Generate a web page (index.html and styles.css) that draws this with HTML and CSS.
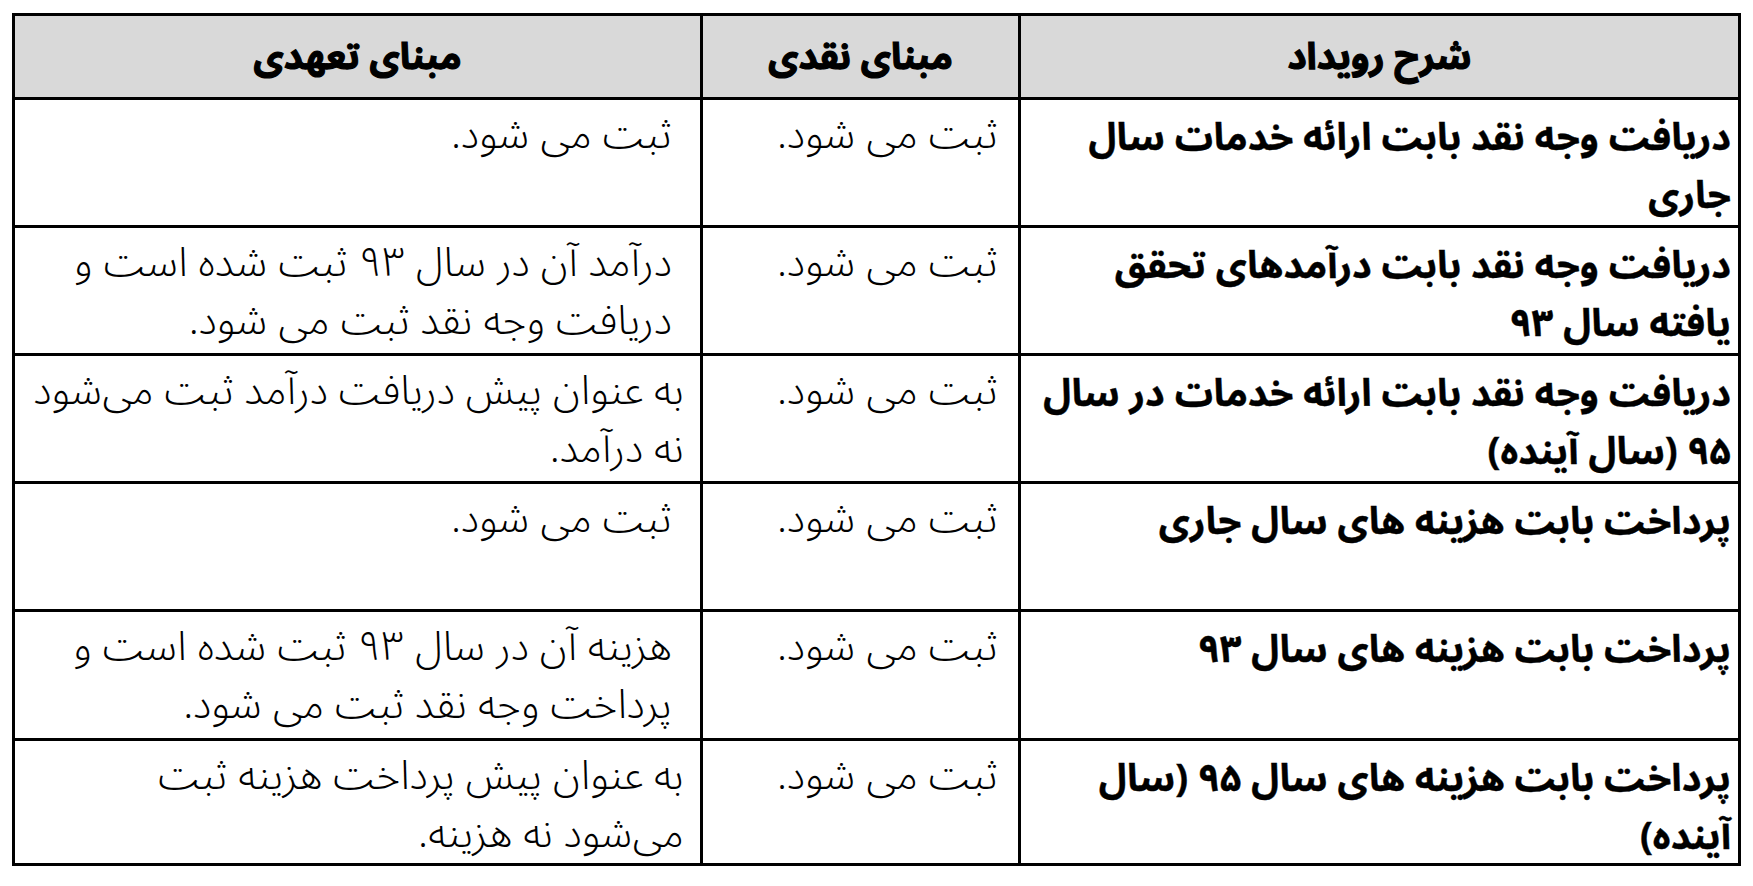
FILE: index.html
```html
<!DOCTYPE html>
<html lang="fa" dir="rtl">
<head>
<meta charset="utf-8">
<title>مقایسه مبنای نقدی و تعهدی</title>
<link rel="stylesheet" href="styles.css">
</head>
<body>
<div class="sheet">
  <div class="grid">
    <div class="cell head">شرح رویداد</div>
    <div class="cell head">مبنای نقدی</div>
    <div class="cell head">مبنای تعهدی</div>

    <div class="cell event">دریافت وجه نقد بابت ارائه خدمات سال<br>جاری</div>
    <div class="cell cash">ثبت می شود.</div>
    <div class="cell accrual indent">ثبت می شود.</div>

    <div class="cell event">دریافت وجه نقد بابت درآمدهای تحقق<br>یافته سال ۹۳</div>
    <div class="cell cash">ثبت می شود.</div>
    <div class="cell accrual indent">درآمد آن در سال ۹۳ ثبت شده است و<br>دریافت وجه نقد ثبت می شود.</div>

    <div class="cell event">دریافت وجه نقد بابت ارائه خدمات در سال<br>۹۵ (سال آینده)</div>
    <div class="cell cash">ثبت می شود.</div>
    <div class="cell accrual">به عنوان پیش دریافت درآمد ثبت می‌شود<br>نه درآمد.</div>

    <div class="cell event">پرداخت بابت هزینه های سال جاری</div>
    <div class="cell cash">ثبت می شود.</div>
    <div class="cell accrual indent">ثبت می شود.</div>

    <div class="cell event">پرداخت بابت هزینه های سال ۹۳</div>
    <div class="cell cash">ثبت می شود.</div>
    <div class="cell accrual indent">هزینه آن در سال ۹۳ ثبت شده است و<br>پرداخت وجه نقد ثبت می شود.</div>

    <div class="cell event">پرداخت بابت هزینه های سال ۹۵ (سال<br>آینده)</div>
    <div class="cell cash">ثبت می شود.</div>
    <div class="cell accrual">به عنوان پیش پرداخت هزینه ثبت<br>می‌شود نه هزینه.</div>
  </div>
</div>
</body>
</html>
```
FILE: styles.css
```css
html, body {
  margin: 0;
  padding: 0;
  background: #ffffff;
}

.sheet {
  padding: 13px 0 0 12px;
  direction: ltr;
}

.grid {
  direction: rtl;
  display: grid;
  grid-template-columns: 717px 315px 685px;
  grid-template-rows: 81px 125px 125px 125px 125px 126px 122px;
  gap: 3px;
  padding: 3px;
  background: #000000;
  width: 1729px;
  box-sizing: border-box;
  font-family: "Noto Sans Arabic", "DejaVu Sans", sans-serif;
  color: #000000;
}

.cell {
  background: #ffffff;
  white-space: nowrap;
  box-sizing: border-box;
}

.head {
  background: #d9d9d9;
  display: flex;
  align-items: center;
  justify-content: center;
  font-size: 37px;
  font-weight: 700;
  -webkit-text-stroke: 1.2px #000000;
}

.event {
  font-size: 38px;
  font-weight: 700;
  line-height: 58px;
  padding: 9px 7px 0 4px;
  text-align: right;
  -webkit-text-stroke: 0.4px #000000;
}

.cash {
  font-size: 41px;
  font-weight: 300;
  line-height: 58px;
  padding: 6px 20px 0 4px;
  text-align: right;
}

.accrual {
  font-size: 41px;
  font-weight: 300;
  line-height: 58px;
  padding: 6px 16px 0 4px;
  text-align: right;
}

.accrual.indent {
  padding-right: 28px;
}
```
